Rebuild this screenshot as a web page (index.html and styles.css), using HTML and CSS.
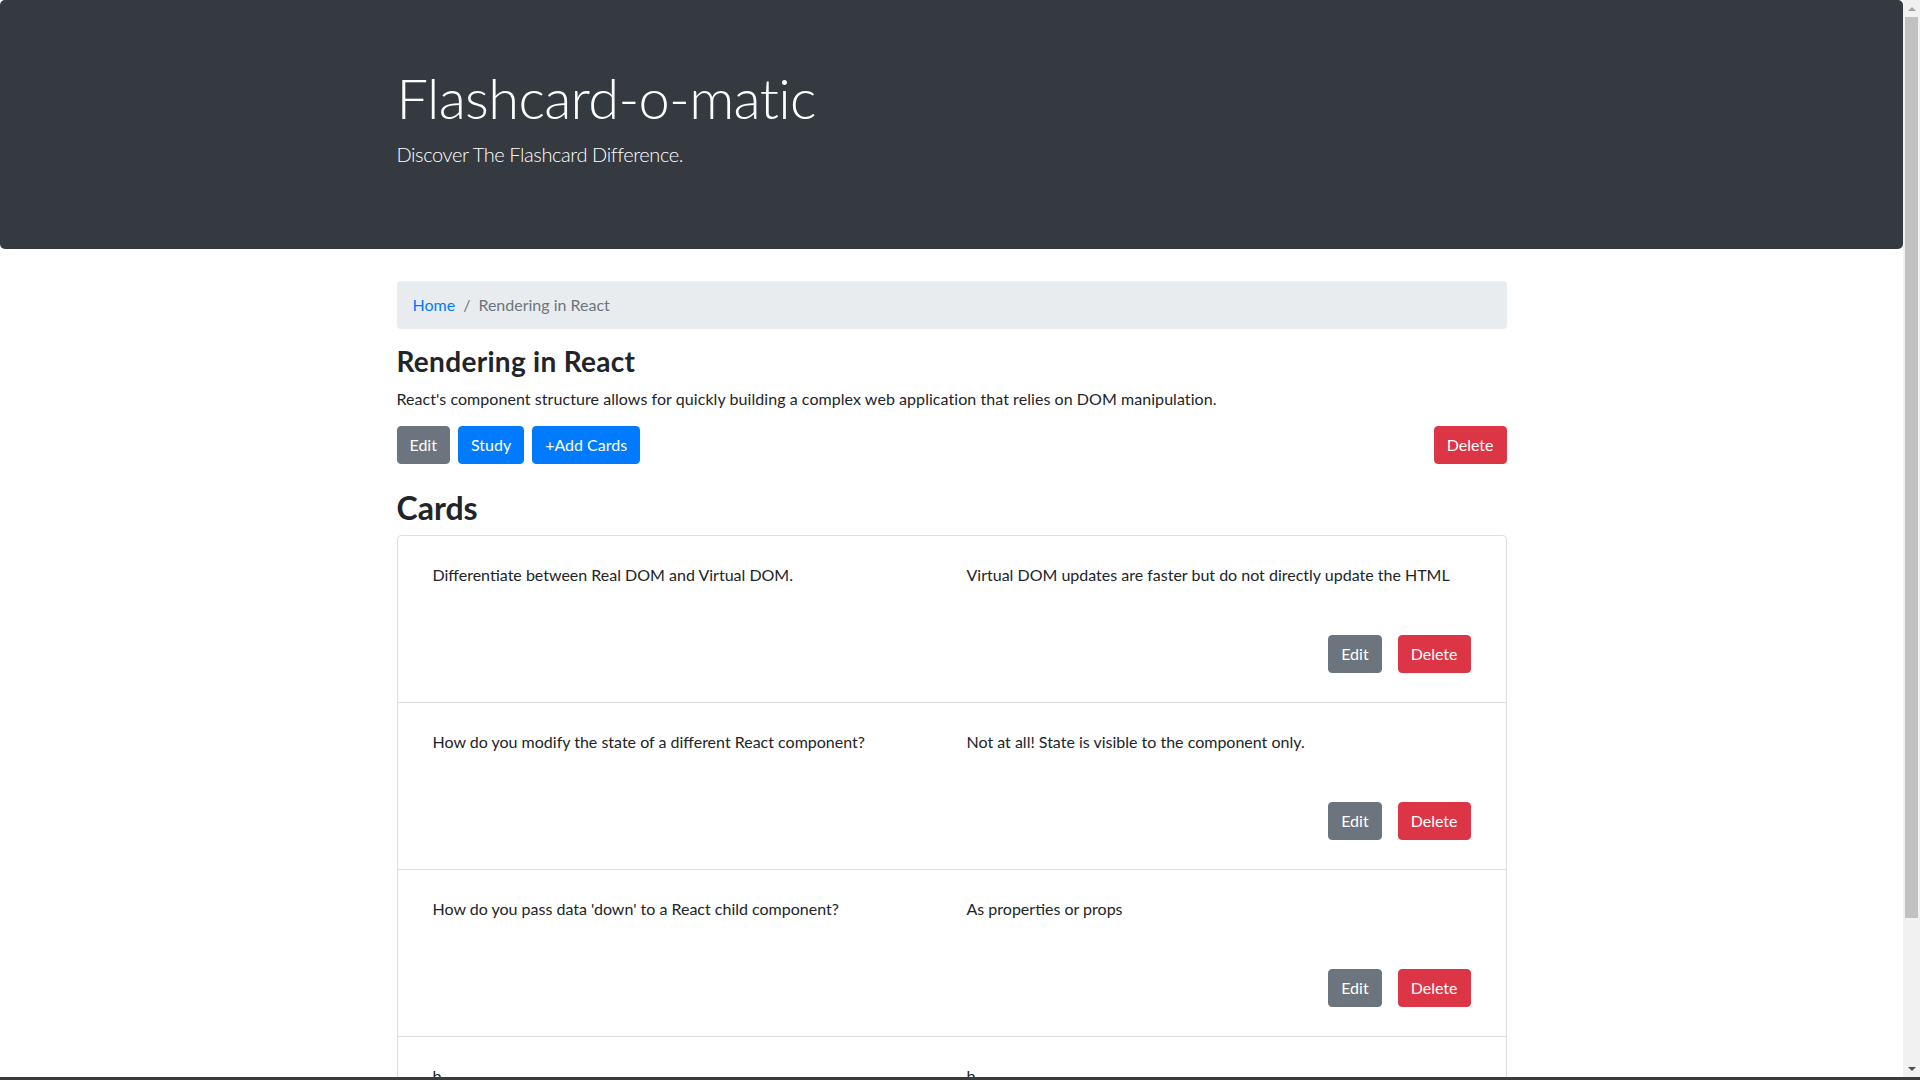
FILE: index.html
```html
<!DOCTYPE html>
<html lang="en">
<head>
<meta charset="utf-8">
<title>Flashcard-o-matic</title>
<link rel="stylesheet" href="styles.css">
</head>
<body>
<div class="screen">
  <div class="viewport">
    <div class="page">
      <header class="jumbotron">
        <div class="container">
          <h1 class="display">Flashcard-o-matic</h1>
          <p class="lead">Discover The Flashcard Difference.</p>
        </div>
      </header>
      <main class="container">
        <nav class="breadcrumb">
          <a class="crumb-link" href="#">Home</a>
          <span class="crumb-sep">/</span>
          <span class="crumb-active">Rendering in React</span>
        </nav>
        <h3 class="deck-title">Rendering in React</h3>
        <p class="deck-desc">React's component structure allows for quickly building a complex web application that relies on DOM manipulation.</p>
        <div class="deck-actions">
          <div class="btn-group">
            <button class="btn btn-secondary">Edit</button>
            <button class="btn btn-primary">Study</button>
            <button class="btn btn-primary">+Add Cards</button>
          </div>
          <button class="btn btn-danger">Delete</button>
        </div>
        <h2 class="cards-title">Cards</h2>
        <ul class="card-list">
          <li class="card-item">
            <div class="card-row">
              <div class="card-col">Differentiate between Real DOM and Virtual DOM.</div>
              <div class="card-col">Virtual DOM updates are faster but do not directly update the HTML</div>
            </div>
            <div class="card-buttons">
              <button class="btn btn-secondary">Edit</button>
              <button class="btn btn-danger">Delete</button>
            </div>
          </li>
          <li class="card-item">
            <div class="card-row">
              <div class="card-col">How do you modify the state of a different React component?</div>
              <div class="card-col">Not at all! State is visible to the component only.</div>
            </div>
            <div class="card-buttons">
              <button class="btn btn-secondary">Edit</button>
              <button class="btn btn-danger">Delete</button>
            </div>
          </li>
          <li class="card-item">
            <div class="card-row">
              <div class="card-col">How do you pass data 'down' to a React child component?</div>
              <div class="card-col">As properties or props</div>
            </div>
            <div class="card-buttons">
              <button class="btn btn-secondary">Edit</button>
              <button class="btn btn-danger">Delete</button>
            </div>
          </li>
          <li class="card-item">
            <div class="card-row">
              <div class="card-col">b</div>
              <div class="card-col">b</div>
            </div>
          </li>
        </ul>
      </main>
    </div>
    <div class="scrollbar">
      <div class="scroll-arrow"><span class="tri-up"></span></div>
      <div class="scroll-thumb"></div>
      <div class="scroll-track"></div>
      <div class="scroll-arrow"><span class="tri-down"></span></div>
    </div>
  </div>
  <div class="taskbar"></div>
</div>
</body>
</html>
```
FILE: styles.css
```css
* { box-sizing: border-box; }
html, body { margin: 0; padding: 0; }
body {
  font-family: "Lato", "Open Sans", sans-serif;
  font-size: 16px;
  line-height: 1.5;
  color: #212529;
  background: #fff;
}
.screen {
  display: flex;
  flex-direction: column;
  height: 1080px;
  overflow: hidden;
}
.viewport {
  display: flex;
  flex: 1;
  min-height: 0;
}
.page {
  flex: 1;
  overflow: hidden;
}
.taskbar {
  height: 3px;
  background: #3b3b3b;
  flex: none;
}

/* scrollbar */
.scrollbar {
  width: 17px;
  flex: none;
  background: #f1f1f1;
  display: flex;
  flex-direction: column;
}
.scroll-arrow {
  height: 17px;
  display: flex;
  align-items: center;
  justify-content: center;
  flex: none;
}
.tri-up {
  width: 0; height: 0;
  border-left: 4px solid transparent;
  border-right: 4px solid transparent;
  border-bottom: 4px solid #a3a3a3;
}
.tri-down {
  width: 0; height: 0;
  border-left: 4px solid transparent;
  border-right: 4px solid transparent;
  border-top: 4px solid #505050;
}
.scroll-thumb {
  height: 901px;
  margin: 0 2px;
  background: #c1c1c1;
  flex: none;
}
.scroll-track { flex: 1; }

/* layout */
.container {
  width: 1140px;
  margin: 0 auto;
  padding: 0 15px;
}
.jumbotron {
  background: #343a40;
  color: #fff;
  padding: 64px 0;
  border-radius: 5px;
  margin-bottom: 32px;
}
.display {
  font-size: 56px;
  font-weight: 300;
  line-height: 1.2;
  letter-spacing: -0.65px;
  margin: 0 0 8px;
}
.lead {
  font-size: 20px;
  font-weight: 300;
  line-height: 1.5;
  letter-spacing: -0.4px;
  margin: 0 0 16px;
}

.breadcrumb {
  display: flex;
  background: #e9ecef;
  border-radius: 4px;
  padding: 12px 16px;
  margin-bottom: 16px;
}
.crumb-link { color: #007bff; text-decoration: none; }
.crumb-sep { color: #6c757d; padding: 0 8px; }
.crumb-active { color: #6c757d; }

.deck-title {
  font-size: 28px;
  font-weight: 700;
  line-height: 1.2;
  letter-spacing: 0.3px;
  margin: 0 0 8px;
}
.deck-desc {
  margin: 0 0 15px;
  letter-spacing: 0.06px;
}
.deck-actions {
  display: flex;
  justify-content: space-between;
  align-items: center;
}
.btn-group { display: flex; gap: 8px; }

.btn {
  font-family: inherit;
  font-size: 16px;
  line-height: 1.5;
  padding: 6px 12px;
  border: 1px solid transparent;
  border-radius: 4px;
  color: #fff;
  cursor: pointer;
}
.btn-secondary { background: #6c757d; border-color: #6c757d; }
.btn-primary { background: #007bff; border-color: #007bff; }
.btn-danger { background: #dc3545; border-color: #dc3545; }

.cards-title {
  font-size: 32px;
  font-weight: 700;
  line-height: 1.2;
  margin: 25px 0 8px;
}
.card-list {
  list-style: none;
  margin: 0;
  padding: 0;
  border: 1px solid rgba(0,0,0,.125);
  border-radius: 4px;
}
.card-item {
  padding: 27px 20px 29px;
  border-top: 1px solid rgba(0,0,0,.125);
}
.card-item:first-child { border-top: 0; }
.card-row { display: flex; }
.card-col {
  flex: 1 1 0;
  padding: 0 15px;
}
.card-buttons {
  display: flex;
  justify-content: flex-end;
  gap: 16px;
  padding: 0 15px;
  margin-top: 48px;
}
```
